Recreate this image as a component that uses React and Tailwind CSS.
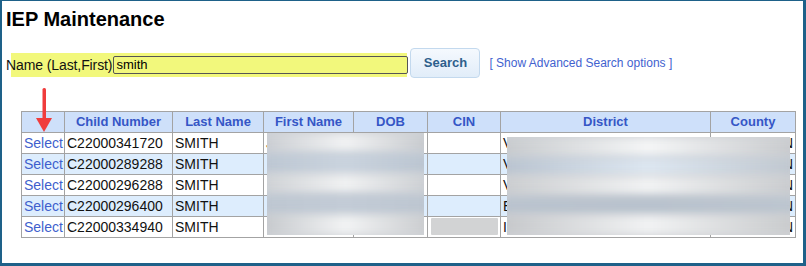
import React from 'react';

const COLS = [
  { label: '', w: 43 },
  { label: 'Child Number', w: 108 },
  { label: 'Last Name', w: 91 },
  { label: 'First Name', w: 90 },
  { label: 'DOB', w: 74 },
  { label: 'CIN', w: 73 },
  { label: 'District', w: 210 },
  { label: 'County', w: 85 },
];

const ROWS = [
  { child: 'C22000341720', first: 'J', district: 'V' },
  { child: 'C22000289288', first: '', district: 'V' },
  { child: 'C22000296288', first: '', district: 'V' },
  { child: 'C22000296400', first: '', district: 'E' },
  { child: 'C22000334940', first: '', district: 'I' },
];

// smeared redaction bands, one per table row
const NAME_BANDS = [
  'bg-gradient-to-r from-[#c9ccd1] via-[#f1f2f3] to-[#c6c9cd]',
  'bg-gradient-to-r from-[#bcc6d2] via-[#c9d3de] to-[#bac4d0]',
  'bg-gradient-to-r from-[#cdd0d4] via-[#f0f1f2] to-[#cbced2]',
  'bg-gradient-to-r from-[#bdc6d1] via-[#c2cbd6] to-[#bcc5d0]',
  'bg-gradient-to-r from-[#c4c7cb] via-[#f2f3f4] to-[#c9cbce]',
];

const DIST_BANDS = [
  'bg-gradient-to-r from-[#c7cacd] via-[#f4f5f6] to-[#c8cacd]',
  'bg-gradient-to-r from-[#b9c3cf] via-[#dce6f0] to-[#c0c7cf]',
  'bg-gradient-to-r from-[#cacccf] via-[#f1f2f3] to-[#c9cbce]',
  'bg-gradient-to-r from-[#bac3ce] via-[#b8c2cd] to-[#bcc5cf]',
  'bg-gradient-to-r from-[#c5c7ca] via-[#f1f2f3] to-[#c8cacc]',
];

export default function App() {
  return (
    <div
      className="relative w-[806px] h-[266px] bg-white border-l-2 border-t border-r-[3px] border-b-[3px] border-[#1e6189] overflow-hidden"
      style={{ fontFamily: '"Liberation Sans", Arial, sans-serif' }}
    >
      <h1 className="pl-[4px] pt-[7px] text-[20px] leading-[23px] font-bold text-black">IEP Maintenance</h1>

      {/* search row */}
      <div className="relative mt-[17px] flex items-center h-[30px] pl-[4px]">
        <div className="absolute left-[9px] top-[5px] w-[396px] h-[24px] bg-[#f2f87c]" />
        <label className="relative text-[14px] leading-[16px] text-[#111] mt-[3px] tracking-[-0.1px]">Name (Last,First)</label>
        <div className="relative ml-[1px] mt-[3px] w-[295px] h-[18px] border border-[#555] rounded-[2px] bg-[#f2f87c] flex items-center px-[2px] text-[13px] text-black">
          smith
        </div>
        <button className="relative ml-[2px] w-[70px] h-[30px] rounded-[4px] border border-[#c3d9ee] bg-gradient-to-b from-[#f5f9fe] to-[#e1edf9] text-[13px] font-bold text-[#2e5f8c]">
          Search
        </button>
        <a className="relative ml-[9px] text-[12px] text-[#4262cf]">[ Show Advanced Search options ]</a>
      </div>

      {/* results */}
      <div className="relative ml-[19px] mt-[33px] w-[774px]">
        <table className="table-fixed border-collapse w-[774px] border border-[#a3a3a3] text-[14px] leading-[16px]">
          <colgroup>
            {COLS.map((c, i) => (
              <col key={i} style={{ width: c.w }} />
            ))}
          </colgroup>
          <thead>
            <tr className="h-[21px] bg-[#cee0fa]">
              {COLS.map((c, i) => (
                <th key={i} className="border border-[#a3a3a3] text-[13px] font-bold text-[#3556c6] text-center p-0">
                  {c.label}
                </th>
              ))}
            </tr>
          </thead>
          <tbody>
            {ROWS.map((r, i) => (
              <tr key={r.child} className={`h-[21px] ${i % 2 ? 'bg-[#ddedfd]' : 'bg-white'}`}>
                <td className="border border-[#a3a3a3] px-[2px] text-[#3f5fcd] whitespace-nowrap">Select</td>
                <td className="border border-[#a3a3a3] px-[2px] text-[#111]">{r.child}</td>
                <td className="border border-[#a3a3a3] px-[2px] text-[#111]">SMITH</td>
                <td className="border border-[#a3a3a3] px-[2px] text-[#8a6a3a]">{r.first}</td>
                <td className="border border-[#a3a3a3] px-[2px]"></td>
                <td className="border border-[#a3a3a3] px-[2px]"></td>
                <td className="border border-[#a3a3a3] px-[2px] text-[#111]">{r.district}</td>
                <td className="border border-[#a3a3a3] px-[2px] text-right text-[#111]">N</td>
              </tr>
            ))}
          </tbody>
        </table>

        {/* redaction over first name / DOB */}
        <div className="absolute left-[246px] top-[22px] w-[157px] h-[102px] overflow-hidden bg-[#cfd3d8] flex flex-col">
          {NAME_BANDS.map((b, i) => (
            <div key={i} className={`flex-1 -mx-[6px] blur-[4px] ${b}`} />
          ))}
        </div>

        {/* redaction over CIN last row */}
        <div className="absolute left-[410px] top-[107px] w-[67px] h-[17px] bg-[#d2d3d4] rounded-[1px]" />

        {/* redaction over district / county */}
        <div className="absolute left-[486px] top-[26px] w-[283px] h-[98px] overflow-hidden bg-[#cfd2d6] flex flex-col">
          {DIST_BANDS.map((b, i) => (
            <div key={i} className={`flex-1 -mx-[6px] blur-[4px] ${b}`} />
          ))}
        </div>
      </div>

      {/* red annotation arrow */}
      <svg className="absolute left-[32px] top-[86px]" width="20" height="46" viewBox="0 0 20 46">
        <rect x="8.5" y="1" width="3.5" height="32" rx="1.5" fill="#f03c3c" />
        <polygon points="2,31 18,31 10,45" fill="#f03c3c" />
      </svg>
    </div>
  );
}
